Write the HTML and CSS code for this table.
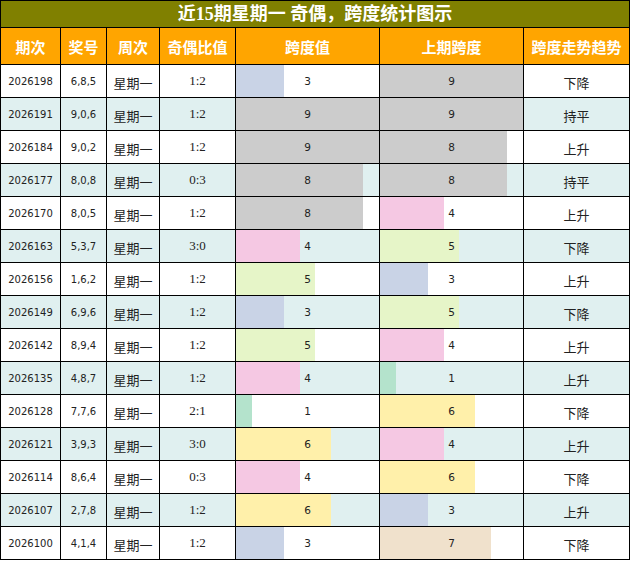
FILE: index.html
```html
<!DOCTYPE html>
<html lang="zh">
<head>
<meta charset="utf-8">
<title>近15期星期一 奇偶，跨度统计图示</title>
<link rel="stylesheet" href="styles.css">
</head>
<body>
<div class="chart">
  <div class="title">近15期星期一 奇偶，跨度统计图示</div>
  <div class="row head">
    <div class="cell">期次</div><div class="cell">奖号</div><div class="cell">周次</div><div class="cell">奇偶比值</div><div class="cell">跨度值</div><div class="cell">上期跨度</div><div class="cell">跨度走势趋势</div>
  </div>

  <div class="row">
    <div class="cell num">2026198</div><div class="cell num">6,8,5</div><div class="cell cjk">星期一</div><div class="cell ratio">1:2</div>
    <div class="cell bar"><span class="fill v3" style="width:33.33%"></span><span class="lbl">3</span></div>
    <div class="cell bar"><span class="fill v9" style="width:100%"></span><span class="lbl">9</span></div>
    <div class="cell cjk">下降</div>
  </div>
  <div class="row alt">
    <div class="cell num">2026191</div><div class="cell num">9,0,6</div><div class="cell cjk">星期一</div><div class="cell ratio">1:2</div>
    <div class="cell bar"><span class="fill v9" style="width:100%"></span><span class="lbl">9</span></div>
    <div class="cell bar"><span class="fill v9" style="width:100%"></span><span class="lbl">9</span></div>
    <div class="cell cjk">持平</div>
  </div>
  <div class="row">
    <div class="cell num">2026184</div><div class="cell num">9,0,2</div><div class="cell cjk">星期一</div><div class="cell ratio">1:2</div>
    <div class="cell bar"><span class="fill v9" style="width:100%"></span><span class="lbl">9</span></div>
    <div class="cell bar"><span class="fill v8" style="width:88.89%"></span><span class="lbl">8</span></div>
    <div class="cell cjk">上升</div>
  </div>
  <div class="row alt">
    <div class="cell num">2026177</div><div class="cell num">8,0,8</div><div class="cell cjk">星期一</div><div class="cell ratio">0:3</div>
    <div class="cell bar"><span class="fill v8" style="width:88.89%"></span><span class="lbl">8</span></div>
    <div class="cell bar"><span class="fill v8" style="width:88.89%"></span><span class="lbl">8</span></div>
    <div class="cell cjk">持平</div>
  </div>
  <div class="row">
    <div class="cell num">2026170</div><div class="cell num">8,0,5</div><div class="cell cjk">星期一</div><div class="cell ratio">1:2</div>
    <div class="cell bar"><span class="fill v8" style="width:88.89%"></span><span class="lbl">8</span></div>
    <div class="cell bar"><span class="fill v4" style="width:44.44%"></span><span class="lbl">4</span></div>
    <div class="cell cjk">上升</div>
  </div>
  <div class="row alt">
    <div class="cell num">2026163</div><div class="cell num">5,3,7</div><div class="cell cjk">星期一</div><div class="cell ratio">3:0</div>
    <div class="cell bar"><span class="fill v4" style="width:44.44%"></span><span class="lbl">4</span></div>
    <div class="cell bar"><span class="fill v5" style="width:55.56%"></span><span class="lbl">5</span></div>
    <div class="cell cjk">下降</div>
  </div>
  <div class="row">
    <div class="cell num">2026156</div><div class="cell num">1,6,2</div><div class="cell cjk">星期一</div><div class="cell ratio">1:2</div>
    <div class="cell bar"><span class="fill v5" style="width:55.56%"></span><span class="lbl">5</span></div>
    <div class="cell bar"><span class="fill v3" style="width:33.33%"></span><span class="lbl">3</span></div>
    <div class="cell cjk">上升</div>
  </div>
  <div class="row alt">
    <div class="cell num">2026149</div><div class="cell num">6,9,6</div><div class="cell cjk">星期一</div><div class="cell ratio">1:2</div>
    <div class="cell bar"><span class="fill v3" style="width:33.33%"></span><span class="lbl">3</span></div>
    <div class="cell bar"><span class="fill v5" style="width:55.56%"></span><span class="lbl">5</span></div>
    <div class="cell cjk">下降</div>
  </div>
  <div class="row">
    <div class="cell num">2026142</div><div class="cell num">8,9,4</div><div class="cell cjk">星期一</div><div class="cell ratio">1:2</div>
    <div class="cell bar"><span class="fill v5" style="width:55.56%"></span><span class="lbl">5</span></div>
    <div class="cell bar"><span class="fill v4" style="width:44.44%"></span><span class="lbl">4</span></div>
    <div class="cell cjk">上升</div>
  </div>
  <div class="row alt">
    <div class="cell num">2026135</div><div class="cell num">4,8,7</div><div class="cell cjk">星期一</div><div class="cell ratio">1:2</div>
    <div class="cell bar"><span class="fill v4" style="width:44.44%"></span><span class="lbl">4</span></div>
    <div class="cell bar"><span class="fill v1" style="width:11.11%"></span><span class="lbl">1</span></div>
    <div class="cell cjk">上升</div>
  </div>
  <div class="row">
    <div class="cell num">2026128</div><div class="cell num">7,7,6</div><div class="cell cjk">星期一</div><div class="cell ratio">2:1</div>
    <div class="cell bar"><span class="fill v1" style="width:11.11%"></span><span class="lbl">1</span></div>
    <div class="cell bar"><span class="fill v6" style="width:66.67%"></span><span class="lbl">6</span></div>
    <div class="cell cjk">下降</div>
  </div>
  <div class="row alt">
    <div class="cell num">2026121</div><div class="cell num">3,9,3</div><div class="cell cjk">星期一</div><div class="cell ratio">3:0</div>
    <div class="cell bar"><span class="fill v6" style="width:66.67%"></span><span class="lbl">6</span></div>
    <div class="cell bar"><span class="fill v4" style="width:44.44%"></span><span class="lbl">4</span></div>
    <div class="cell cjk">上升</div>
  </div>
  <div class="row">
    <div class="cell num">2026114</div><div class="cell num">8,6,4</div><div class="cell cjk">星期一</div><div class="cell ratio">0:3</div>
    <div class="cell bar"><span class="fill v4" style="width:44.44%"></span><span class="lbl">4</span></div>
    <div class="cell bar"><span class="fill v6" style="width:66.67%"></span><span class="lbl">6</span></div>
    <div class="cell cjk">下降</div>
  </div>
  <div class="row alt">
    <div class="cell num">2026107</div><div class="cell num">2,7,8</div><div class="cell cjk">星期一</div><div class="cell ratio">1:2</div>
    <div class="cell bar"><span class="fill v6" style="width:66.67%"></span><span class="lbl">6</span></div>
    <div class="cell bar"><span class="fill v3" style="width:33.33%"></span><span class="lbl">3</span></div>
    <div class="cell cjk">上升</div>
  </div>
  <div class="row">
    <div class="cell num">2026100</div><div class="cell num">4,1,4</div><div class="cell cjk">星期一</div><div class="cell ratio">1:2</div>
    <div class="cell bar"><span class="fill v3" style="width:33.33%"></span><span class="lbl">3</span></div>
    <div class="cell bar"><span class="fill v7" style="width:77.78%"></span><span class="lbl">7</span></div>
    <div class="cell cjk">下降</div>
  </div>
</div>
</body>
</html>
```

FILE: styles.css
```css
html, body {
  margin: 0;
  padding: 0;
  background: #ffffff;
}

.chart {
  width: 630px;
  box-sizing: border-box;
  border: 1px solid #000;
  background: #000;
  display: flex;
  flex-direction: column;
  gap: 1px;
}

.title {
  height: 26px;
  background: #808000;
  color: #ffffff;
  font-family: "Liberation Serif", "Noto Sans CJK SC", serif;
  font-weight: bold;
  font-size: 18px;
  line-height: 26px;
  text-align: center;
}

.row {
  display: grid;
  grid-template-columns: 59px 45px 52px 75px 143px 143px 105px;
  gap: 1px;
  height: 32px;
}

.cell {
  background: #ffffff;
  display: flex;
  align-items: center;
  justify-content: center;
  color: #222;
  overflow: hidden;
}

.row.alt .cell {
  background: #e0f0f0;
}

.head {
  height: 36px;
}

.head .cell {
  background: #ffa500;
  color: #ffffff;
  font-family: "Noto Sans CJK SC", sans-serif;
  font-weight: bold;
  font-size: 15px;
}

.num {
  font-family: "DejaVu Sans", sans-serif;
  font-size: 10px;
}

.cjk {
  font-family: "Noto Sans CJK SC", sans-serif;
  font-size: 13px;
  padding-top: 2px;
  box-sizing: border-box;
}

.ratio {
  font-family: "Liberation Serif", serif;
  font-size: 13px;
}

.bar {
  display: grid;
  grid-template-columns: 1fr;
  grid-template-rows: 1fr;
  align-items: stretch;
  justify-items: start;
}

.fill {
  grid-area: 1 / 1;
  height: 100%;
}

.lbl {
  grid-area: 1 / 1;
  justify-self: center;
  align-self: center;
  font-family: "DejaVu Sans", sans-serif;
  font-size: 10.5px;
  color: #222;
}

.v1 { background: #b4e3cc; }
.v3 { background: #c9d3e6; }
.v4 { background: #f5c8e3; }
.v5 { background: #e6f5c8; }
.v6 { background: #fff0aa; }
.v7 { background: #f0e1cc; }
.v8 { background: #cccccc; }
.v9 { background: #cccccc; }
```
